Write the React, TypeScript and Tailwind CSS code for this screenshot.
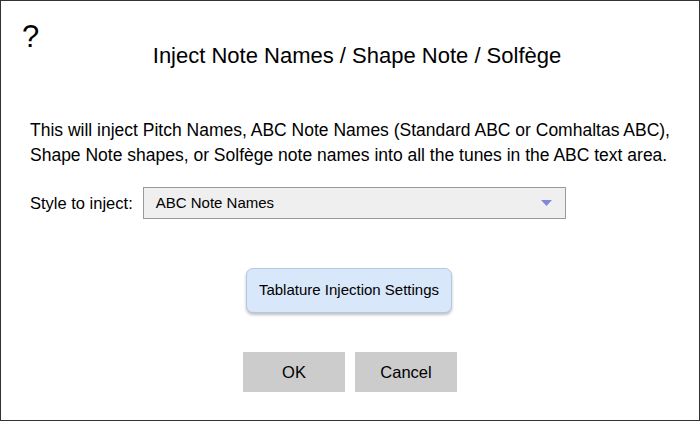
import React from "react";

export default function App() {
  return (
    <div
      className="w-[700px] h-[421px] bg-white border border-[#333] box-border flex flex-col text-black"
      style={{ fontFamily: '"Liberation Sans", Arial, sans-serif' }}
    >
      <div className="relative h-[105px]">
        <div className="absolute left-[21px] top-[20px] text-[31px] leading-none">?</div>
        <div className="pt-[42px] text-center text-[22px] leading-[26px] pl-[14px]">
          Inject Note Names / Shape Note / Solfège
        </div>
      </div>
      <div className="px-[29px] text-[17.5px] leading-[25px] pt-[12px] whitespace-nowrap">
        This will inject Pitch Names, ABC Note Names (Standard ABC or Comhaltas ABC),
        <br />
        Shape Note shapes, or Solfège note names into all the tunes in the ABC text area.
      </div>
      <div className="flex items-center pl-[29px] mt-[19px] gap-[10px]">
        <span className="text-[16.5px]">Style to inject:</span>
        <div className="w-[423px] h-[32px] bg-[#efefef] border border-[#9a9a9a] flex items-center justify-between pl-[12px] pr-[13px] text-[15px]">
          <span>ABC Note Names</span>
          <svg width="11" height="6" viewBox="0 0 11 6">
            <polygon points="0,0 11,0 5.5,6" fill="#8186e0" />
          </svg>
        </div>
      </div>
      <div className="flex justify-center mt-[49px]">
        <div className="w-[206px] h-[45px] rounded-[7px] bg-[#d8e7f9] border border-[#b3c9e3] shadow-[0_2px_3px_rgba(0,0,0,0.25)] flex items-center justify-center text-[15px] ml-[-2px]">
          Tablature Injection Settings
        </div>
      </div>
      <div className="flex justify-center gap-[10px] mt-[39px]">
        <div className="w-[102px] h-[40px] bg-[#cccccc] flex items-center justify-center text-[16.5px]">OK</div>
        <div className="w-[102px] h-[40px] bg-[#cccccc] flex items-center justify-center text-[16.5px]">Cancel</div>
      </div>
    </div>
  );
}
